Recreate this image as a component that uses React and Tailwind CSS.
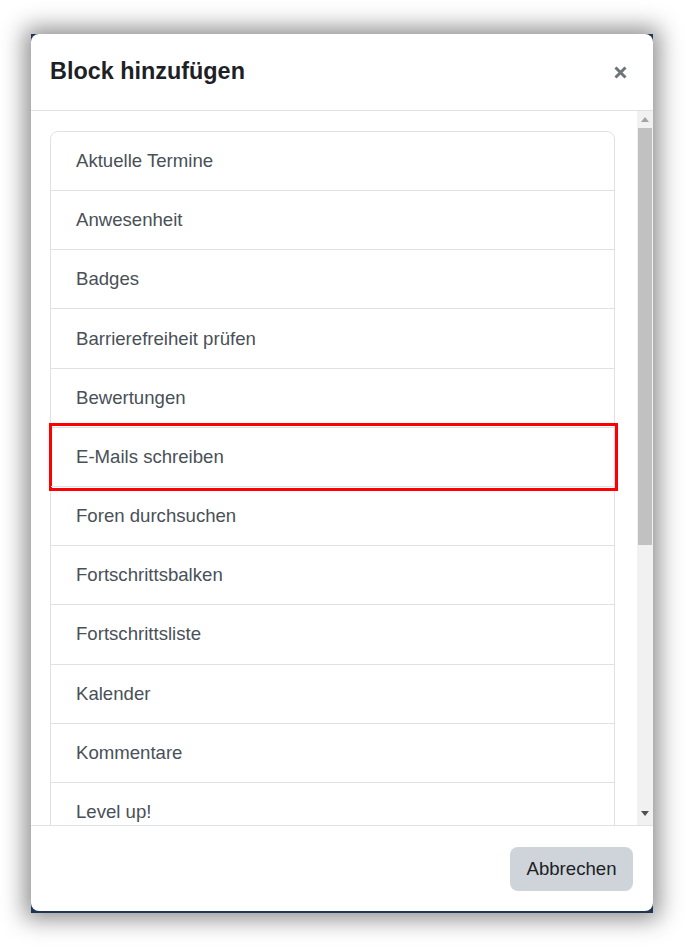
const BLOCKS = [
  "Aktuelle Termine",
  "Anwesenheit",
  "Badges",
  "Barrierefreiheit prüfen",
  "Bewertungen",
  "E-Mails schreiben",
  "Foren durchsuchen",
  "Fortschrittsbalken",
  "Fortschrittsliste",
  "Kalender",
  "Kommentare",
  "Level up!",
];

const HIGHLIGHT = "E-Mails schreiben";

function Scrollbar() {
  return (
    <div className="w-[16px] shrink-0 bg-[#f1f1f1] flex flex-col items-center">
      {/* up arrow */}
      <div className="h-[17px] w-full flex items-center justify-center">
        <svg width="8" height="5" viewBox="0 0 8 5">
          <path d="M0 5 L4 0 L8 5 Z" fill="#a3a3a3" />
        </svg>
      </div>
      {/* thumb */}
      <div className="w-[14px] h-[417px] bg-[#c1c1c1]" />
      <div className="flex-1" />
      {/* down arrow */}
      <div className="h-[17px] w-full flex items-center justify-center mb-[3px]">
        <svg width="8" height="5" viewBox="0 0 8 5">
          <path d="M0 0 L8 0 L4 5 Z" fill="#505050" />
        </svg>
      </div>
    </div>
  );
}

export default function App() {
  return (
    <div
      className="w-[687px] h-[950px] bg-white pt-[34px] pl-[31px]"
      style={{ fontFamily: '"Liberation Sans", Arial, sans-serif' }}
    >
      <div className="w-[622px] h-[879px] bg-[#1f3556] shadow-[0_0_22px_6px_rgba(0,0,0,0.45)]">
        <div className="h-[877px] bg-white rounded-[8px] flex flex-col overflow-hidden">
          {/* Header */}
          <div className="h-[77px] shrink-0 border-b border-[#dee2e6] flex items-center justify-between pl-[19px] pr-[26px]">
            <h5 className="text-[23.4px] font-bold text-[#1d2125] leading-none">Block hinzufügen</h5>
            <svg width="13" height="13" viewBox="0 0 13 13">
              <path d="M1.5 1.5 L11.5 11.5 M11.5 1.5 L1.5 11.5" stroke="#6f7479" strokeWidth="3" />
            </svg>
          </div>

          {/* Body */}
          <div className="flex-1 min-h-0 flex">
            <div className="flex-1 min-w-0 overflow-hidden pt-[20px] pl-[19px] pr-[22px]">
              <div className="border border-[#dee2e6] rounded-t-[8px]">
                {BLOCKS.map((name, i) => (
                  <div
                    key={name}
                    className={`relative flex items-center pl-[25px] text-[18.6px] text-[#495057] ${
                      i > 0 ? "h-[59.2px] border-t border-[#dee2e6]" : "h-[58px]"
                    }`}
                  >
                    {name}
                    {name === HIGHLIGHT && (
                      <div className="absolute -left-[2px] -right-[4px] -top-[5px] -bottom-[5px] border-[3px] border-[#ff0000]" />
                    )}
                  </div>
                ))}
              </div>
            </div>
            <Scrollbar />
          </div>

          {/* Footer */}
          <div className="h-[86px] shrink-0 border-t border-[#dee2e6] flex items-center justify-end pr-[20px]">
            <button className="h-[44px] w-[123px] rounded-[8px] bg-[#ced4da] text-[18.6px] text-[#1d2125]">
              Abbrechen
            </button>
          </div>
        </div>
      </div>
    </div>
  );
}
